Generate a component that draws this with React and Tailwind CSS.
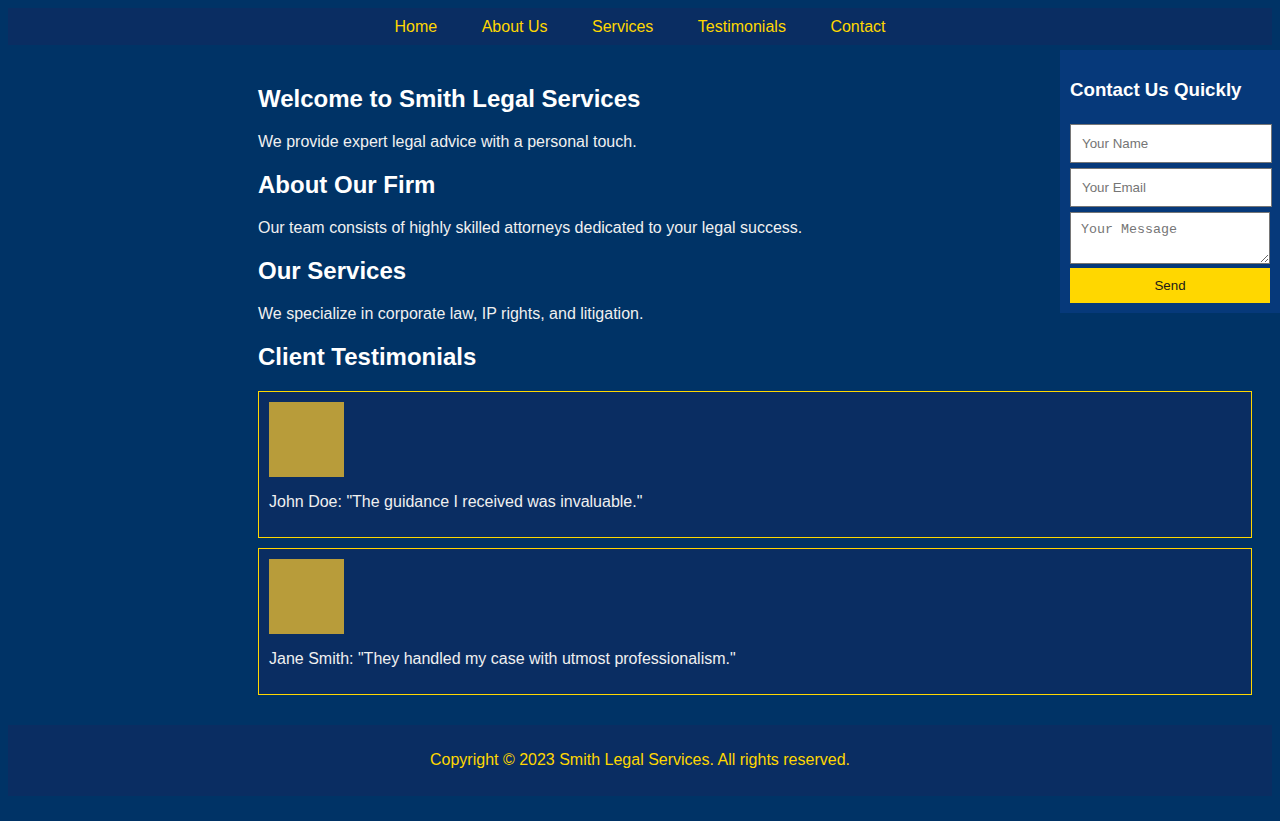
import React from 'react'

const NAV = ['Home', 'About Us', 'Services', 'Testimonials', 'Contact']

const SECTIONS = [
  ['Welcome to Smith Legal Services', 'We provide expert legal advice with a personal touch.'],
  ['About Our Firm', 'Our team consists of highly skilled attorneys dedicated to your legal success.'],
  ['Our Services', 'We specialize in corporate law, IP rights, and litigation.'],
]

const TESTIMONIALS = [
  'John Doe: "The guidance I received was invaluable."',
  'Jane Smith: "They handled my case with utmost professionalism."',
]

export default function App() {
  return (
    <div className="min-h-[821px] bg-[#003366] p-2 text-[16px] text-[#f0f0f0] font-['Liberation_Sans',Arial,sans-serif] relative">
      <nav className="bg-[#0a2d62] h-[37px] flex items-center justify-center gap-[44.5px]">
        {NAV.map(n => (
          <a key={n} className="text-[#ffd700] leading-[18px]">{n}</a>
        ))}
      </nav>

      <main className="ml-[230px] px-5 py-5">
        {SECTIONS.map(([h, p]) => (
          <section key={h}>
            <h2 className="text-[24px] font-bold text-white leading-[27.6px] mt-5 mb-5">{h}</h2>
            <p className="leading-[18.4px] my-4">{p}</p>
          </section>
        ))}
        <h2 className="text-[24px] font-bold text-white leading-[27.6px] mt-5 mb-5">Client Testimonials</h2>
        {TESTIMONIALS.map(t => (
          <div key={t} className="border border-[#ffd700] bg-[#0a2d62] p-[10px] mb-[10px]">
            <div className="w-[75px] h-[75px] bg-[#b89c3a]" />
            <p className="leading-[18.4px] my-4">{t}</p>
          </div>
        ))}
      </main>

      <footer className="bg-[#0a2d62] py-[10px] text-center">
        <p className="text-[#ffd700] leading-[18.4px] my-4">Copyright © 2023 Smith Legal Services. All rights reserved.</p>
      </footer>

      <aside className="absolute top-[50px] right-0 w-[220px] bg-[#06397a] p-[10px]">
        <h3 className="text-[18.72px] font-bold text-white leading-[21.6px] mt-[18.72px] mb-[24px]">Contact Us Quickly</h3>
        <input
          placeholder="Your Name"
          className="block w-[202px] h-[39px] bg-white border border-[#767676] px-[11px] text-[13.33px] text-black placeholder:text-[#757575] mb-[5px]"
        />
        <input
          placeholder="Your Email"
          className="block w-[202px] h-[39px] bg-white border border-[#767676] px-[11px] text-[13.33px] text-black placeholder:text-[#757575] mb-[5px]"
        />
        <textarea
          placeholder="Your Message"
          className="block w-[200px] h-[52px] bg-white border border-[#767676] px-[10px] py-[9px] text-[13.33px] text-black placeholder:text-[#757575] font-['Liberation_Mono',monospace] leading-[15px]"
        />
        <button className="block w-[200px] h-[35px] mt-[4px] bg-[#ffd700] text-[#1a1a1a] text-[13.33px]">Send</button>
      </aside>
    </div>
  )
}
